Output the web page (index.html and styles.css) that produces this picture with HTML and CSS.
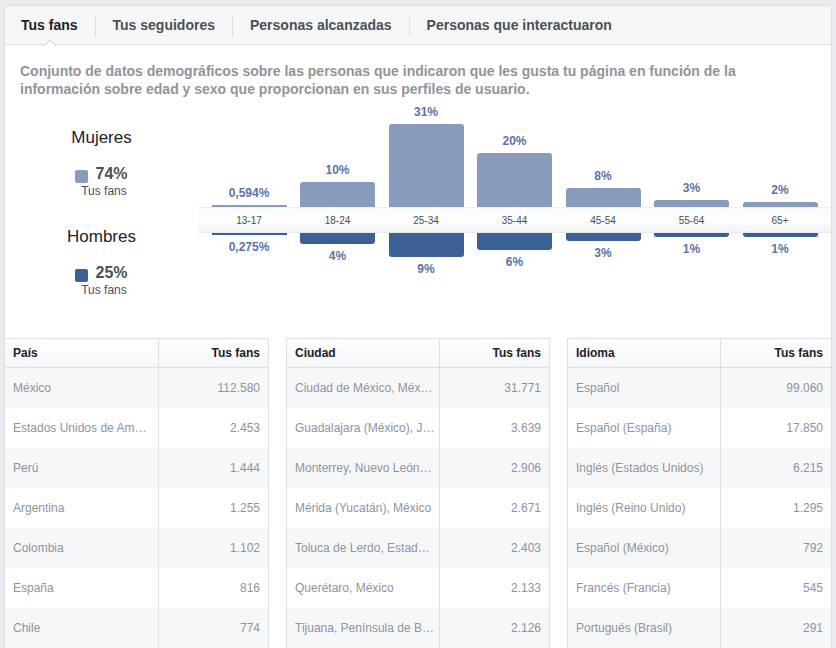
FILE: index.html
```html
<!DOCTYPE html>
<html lang="es">
<head>
<meta charset="utf-8">
<title>Tus fans</title>
<link rel="stylesheet" href="styles.css">
</head>
<body>
<div class="card">
  <nav class="tabs">
    <div class="tab active">Tus fans</div>
    <div class="tab">Tus seguidores</div>
    <div class="tab">Personas alcanzadas</div>
    <div class="tab">Personas que interactuaron</div>
  </nav>
  <p class="desc">Conjunto de datos demográficos sobre las personas que indicaron que les gusta tu página en función de la información sobre edad y sexo que proporcionan en sus perfiles de usuario.</p>
  <section class="demo">
    <div class="legend">
      <div class="legend-group">
        <div class="legend-title">Mujeres</div>
        <div class="legend-value"><span class="swatch female"></span>74%</div>
        <div class="legend-sub">Tus fans</div>
      </div>
      <div class="legend-group men">
        <div class="legend-title">Hombres</div>
        <div class="legend-value"><span class="swatch male"></span>25%</div>
        <div class="legend-sub">Tus fans</div>
      </div>
    </div>
    <div class="chart">
      <div class="bars top">
        <div class="col"><span class="pct">0,594%</span><div class="bar f thin" style="height:2px"></div></div>
        <div class="col"><span class="pct">10%</span><div class="bar f" style="height:25px"></div></div>
        <div class="col"><span class="pct">31%</span><div class="bar f" style="height:83px"></div></div>
        <div class="col"><span class="pct">20%</span><div class="bar f" style="height:54px"></div></div>
        <div class="col"><span class="pct">8%</span><div class="bar f" style="height:19px"></div></div>
        <div class="col"><span class="pct">3%</span><div class="bar f" style="height:7px"></div></div>
        <div class="col"><span class="pct">2%</span><div class="bar f" style="height:5px"></div></div>
      </div>
      <div class="band">
        <span class="age">13-17</span>
        <span class="age">18-24</span>
        <span class="age">25-34</span>
        <span class="age">35-44</span>
        <span class="age">45-54</span>
        <span class="age">55-64</span>
        <span class="age">65+</span>
      </div>
      <div class="bars bottom">
        <div class="col"><div class="bar m thin" style="height:2px"></div><span class="pct">0,275%</span></div>
        <div class="col"><div class="bar m" style="height:11px"></div><span class="pct">4%</span></div>
        <div class="col"><div class="bar m" style="height:24px"></div><span class="pct">9%</span></div>
        <div class="col"><div class="bar m" style="height:17px"></div><span class="pct">6%</span></div>
        <div class="col"><div class="bar m" style="height:8px"></div><span class="pct">3%</span></div>
        <div class="col"><div class="bar m" style="height:4px"></div><span class="pct">1%</span></div>
        <div class="col"><div class="bar m" style="height:4px"></div><span class="pct">1%</span></div>
      </div>
    </div>
  </section>
  <div class="tables">
    <table class="data">
      <thead><tr><th class="name">País</th><th class="num">Tus fans</th></tr></thead>
      <tbody>
        <tr><td class="name"><span class="clip">México</span></td><td class="num">112.580</td></tr>
        <tr><td class="name"><span class="clip">Estados Unidos de América</span></td><td class="num">2.453</td></tr>
        <tr><td class="name"><span class="clip">Perú</span></td><td class="num">1.444</td></tr>
        <tr><td class="name"><span class="clip">Argentina</span></td><td class="num">1.255</td></tr>
        <tr><td class="name"><span class="clip">Colombia</span></td><td class="num">1.102</td></tr>
        <tr><td class="name"><span class="clip">España</span></td><td class="num">816</td></tr>
        <tr><td class="name"><span class="clip">Chile</span></td><td class="num">774</td></tr>
      </tbody>
    </table>
    <table class="data">
      <thead><tr><th class="name">Ciudad</th><th class="num">Tus fans</th></tr></thead>
      <tbody>
        <tr><td class="name"><span class="clip">Ciudad de México, México</span></td><td class="num">31.771</td></tr>
        <tr><td class="name"><span class="clip">Guadalajara (México), Jalisco</span></td><td class="num">3.639</td></tr>
        <tr><td class="name"><span class="clip">Monterrey, Nuevo León, México</span></td><td class="num">2.906</td></tr>
        <tr><td class="name"><span class="clip">Mérida (Yucatán), México</span></td><td class="num">2.671</td></tr>
        <tr><td class="name"><span class="clip">Toluca de Lerdo, Estado de México</span></td><td class="num">2.403</td></tr>
        <tr><td class="name"><span class="clip">Querétaro, México</span></td><td class="num">2.133</td></tr>
        <tr><td class="name"><span class="clip">Tijuana, Península de Baja California</span></td><td class="num">2.126</td></tr>
      </tbody>
    </table>
    <table class="data">
      <thead><tr><th class="name">Idioma</th><th class="num">Tus fans</th></tr></thead>
      <tbody>
        <tr><td class="name"><span class="clip">Español</span></td><td class="num">99.060</td></tr>
        <tr><td class="name"><span class="clip">Español (España)</span></td><td class="num">17.850</td></tr>
        <tr><td class="name"><span class="clip">Inglés (Estados Unidos)</span></td><td class="num">6.215</td></tr>
        <tr><td class="name"><span class="clip">Inglés (Reino Unido)</span></td><td class="num">1.295</td></tr>
        <tr><td class="name"><span class="clip">Español (México)</span></td><td class="num">792</td></tr>
        <tr><td class="name"><span class="clip">Francés (Francia)</span></td><td class="num">545</td></tr>
        <tr><td class="name"><span class="clip">Portugués (Brasil)</span></td><td class="num">291</td></tr>
      </tbody>
    </table>
  </div>
</div>
</body>
</html>
```
FILE: styles.css
```css
* { box-sizing: border-box; }
html, body { margin: 0; padding: 0; }
body {
  background: #e9ebee;
  font-family: "Liberation Sans", Arial, sans-serif;
  color: #1d2129;
  padding: 5px 4px 0 4px;
}
.card {
  background: #fff;
  border: 1px solid #dddfe2;
  border-radius: 3px 3px 0 0;
  border-bottom: none;
}
.tabs {
  display: flex;
  align-items: center;
  height: 39px;
  background: #f6f7f9;
  border-bottom: 1px solid #dddfe2;
  border-radius: 3px 3px 0 0;
}
.tab {
  position: relative;
  padding: 0 17px;
  font-size: 14px;
  font-weight: bold;
  line-height: 21px;
  color: #4b4f56;
  border-left: 1px solid #dddfe2;
}
.tab:first-child { border-left: none; padding-left: 16px; }
.tab.active { color: #1d2129; }
.tab.active::before,
.tab.active::after {
  content: "";
  position: absolute;
  left: 50%;
  width: 0;
  height: 0;
  border-style: solid;
  border-color: transparent;
}
.tab.active::before {
  bottom: -10px;
  margin-left: -7px;
  border-width: 0 7px 7px 7px;
  border-bottom-color: #dddfe2;
}
.tab.active::after {
  bottom: -11px;
  margin-left: -6px;
  border-width: 0 6px 6px 6px;
  border-bottom-color: #fff;
}
.desc {
  margin: 0;
  padding: 17px 30px 0 15px;
  font-size: 14px;
  line-height: 18px;
  font-weight: bold;
  color: #90949c;
}
.demo {
  display: flex;
  height: 240px;
}
.legend {
  width: 193px;
  display: flex;
  flex-direction: column;
  align-items: center;
  padding-top: 30px;
}
.legend-group {
  display: flex;
  flex-direction: column;
  align-items: center;
}
.legend-group.men { margin-top: 29px; }
.legend-title {
  font-size: 17px;
  line-height: 20px;
  color: #1d2129;
}
.legend-value {
  display: flex;
  align-items: center;
  margin-top: 16px;
  font-size: 16px;
  line-height: 20px;
  font-weight: bold;
  color: #4b4f56;
}
.swatch {
  width: 13px;
  height: 13px;
  border-radius: 2px;
  margin: 4px 7px 0 0;
}
.swatch.female { background: #899bbc; }
.swatch.male { background: #3a6094; }
.legend-sub {
  font-size: 12px;
  line-height: 14px;
  color: #4b4f56;
  padding-left: 5px;
}
.chart {
  flex: 1;
  display: flex;
  flex-direction: column;
}
.bars {
  display: flex;
  gap: 13.5px;
  padding: 0 13.5px;
}
.bars.top { height: 109px; }
.col {
  flex: 1;
  display: flex;
  flex-direction: column;
  align-items: stretch;
}
.bars.top .col { justify-content: flex-end; }
.pct {
  text-align: center;
  font-size: 12px;
  line-height: 14px;
  font-weight: bold;
  color: #5a73a7;
}
.bars.top .pct { margin-bottom: 5px; }
.bars.bottom .pct { margin-top: 5px; }
.bar.f { background: #899bbc; border-radius: 3px 3px 0 0; }
.bar.m { background: #3a6094; border-radius: 0 0 3px 3px; }
.bar.thin { border-radius: 0; }
.band {
  display: flex;
  gap: 13.5px;
  padding: 0 13.5px;
  height: 26px;
  align-items: center;
  background: linear-gradient(to bottom, #e4e6e9 0, #f9fafb 1px, #ffffff 45%, #f3f4f6 92%, #e5e7ea 100%);
}
.age {
  flex: 1;
  text-align: center;
  font-size: 10px;
  color: #4b4f56;
}
.tables {
  display: grid;
  grid-template-columns: 1fr 1fr 1fr;
  gap: 17px;
}
.data {
  width: 100%;
  table-layout: fixed;
  border-collapse: collapse;
  border-left: 1px solid #dddfe2;
  border-right: 1px solid #dddfe2;
}
.tables .data:first-child { border-left: none; }
.tables .data:last-child { border-right: none; }
.data th {
  height: 29px;
  padding: 0 8px;
  font-size: 12px;
  font-weight: bold;
  color: #1d2129;
  border-top: 1px solid #dddfe2;
  border-bottom: 1px solid #dddfe2;
  background: linear-gradient(to bottom, #ffffff, #f5f6f8);
}
.data td {
  height: 40px;
  padding: 0 8px;
  font-size: 12px;
  color: #8d949e;
  white-space: nowrap;
}
.data th.name, .data td.name {
  width: 153px;
  text-align: left;
  border-right: 1px solid #dddfe2;
}
.data td.name { padding-right: 2px; }
.clip {
  display: block;
  width: 139.7px;
  overflow: hidden;
  text-overflow: ellipsis;
  white-space: nowrap;
}
.data th.num, .data td.num { text-align: right; }
.data tbody tr:nth-child(odd) td { background: #f6f7f9; }
```
